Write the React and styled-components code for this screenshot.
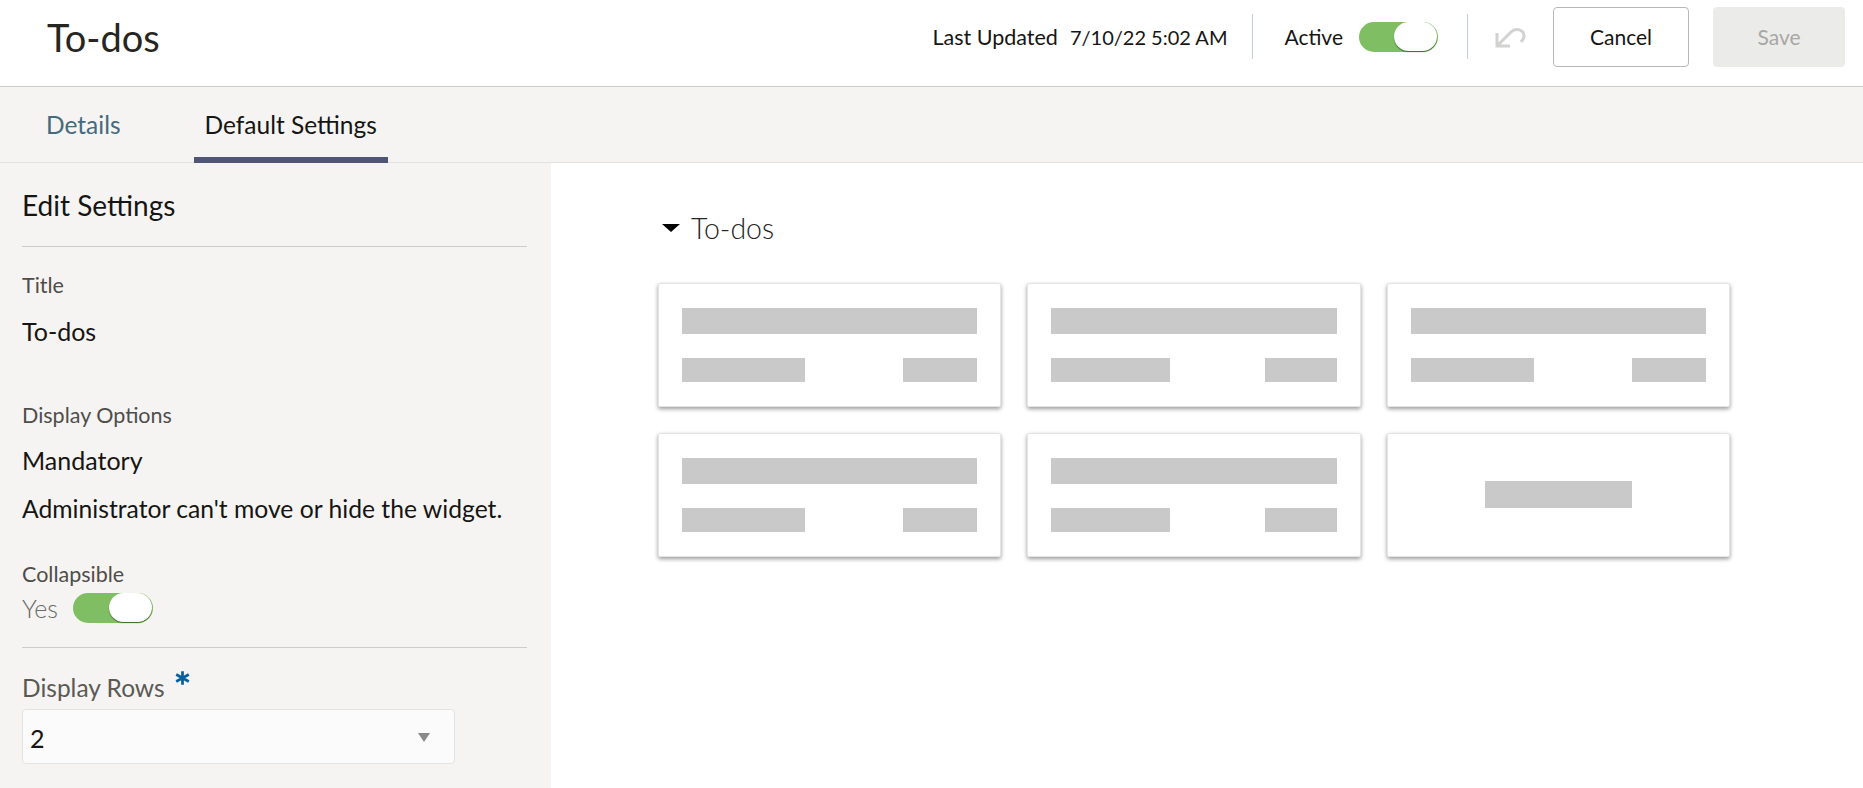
import React from "react";
import styled, { createGlobalStyle } from "styled-components";

const GlobalStyle = createGlobalStyle`
  html, body {
    margin: 0;
    padding: 0;
    background: #fff;
    font-family: "Lato", "Noto Sans", sans-serif;
    color: #161513;
  }
  * { box-sizing: border-box; }
`;

const Page = styled.div`
  width: 1863px;
  height: 788px;
  overflow: hidden;
  display: flex;
  flex-direction: column;
`;

// Top bar
const Header = styled.header`
  height: 87px;
  flex: none;
  display: flex;
  align-items: center;
  padding: 0 18px 13px 47px;
  border-bottom: 1px solid #cfcdc9;
  background: #fff;
`;

const PageTitle = styled.h1`
  margin: 0 auto 0 0;
  font-size: 38px;
  font-weight: 400;
  color: #262522;
`;

const MetaText = styled.span`
  font-size: ${(props) => props.$size}px;
  white-space: nowrap;
  margin-left: ${(props) => props.$gap || 0}px;
`;

const Divider = styled.div`
  width: 1px;
  height: 45px;
  background: #c4ced6;
  margin: 0 ${(props) => props.$right}px 0 ${(props) => props.$left}px;
`;

const SwitchTrack = styled.div`
  position: relative;
  flex: none;
  width: ${(props) => props.$w}px;
  height: 30px;
  border-radius: 15px;
  background: #7fbe62;
  margin-left: ${(props) => props.$gap}px;
`;

const SwitchKnob = styled.div`
  position: absolute;
  top: 0;
  right: 1px;
  width: 43px;
  height: 29px;
  border-radius: 15px;
  background: #fff;
  box-shadow: 0 1px 1px #3d6b2a;
`;

const UndoIcon = styled.svg`
  flex: none;
  margin-right: 26px;
`;

const Button = styled.button`
  height: 60px;
  width: ${(props) => props.$w}px;
  border-radius: 4px;
  font-family: inherit;
  font-size: 21px;
  border: 1px solid ${(props) => (props.disabled ? "#ebebe9" : "#b9b7b3")};
  background: ${(props) => (props.disabled ? "#ebebe9" : "#fff")};
  color: ${(props) => (props.disabled ? "#a8a7a4" : "#161513")};
  margin-left: ${(props) => props.$gap || 0}px;
`;

// Tabs
const TabBar = styled.nav`
  height: 76px;
  flex: none;
  display: flex;
  padding-left: 36px;
  background: #f5f4f2;
  border-bottom: 1px solid #e3e2df;
`;

const Tab = styled.div`
  display: flex;
  align-items: center;
  padding: 4px ${(props) => (props.$active ? 11 : 10)}px 0;
  margin-right: ${(props) => (props.$active ? 0 : 63)}px;
  font-size: 24.500px;
  color: ${(props) => (props.$active ? "#161513" : "#456a7c")};
  border-bottom: 6px solid ${(props) => (props.$active ? "#4f5574" : "transparent")};
  margin-bottom: -1px;
`;

// Body
const Body = styled.div`
  flex: 1;
  display: flex;
  min-height: 0;
`;

const Sidebar = styled.aside`
  width: 551px;
  flex: none;
  background: #f5f4f2;
  padding: 24px 22px 0;
`;

const SidebarTitle = styled.h2`
  margin: 0;
  font-size: 28px;
  line-height: 36px;
  font-weight: 400;
`;

const Rule = styled.hr`
  margin: ${(props) => props.$top}px 0 0;
  border: 0;
  border-top: 1px solid #cdccc9;
  width: 505px;
`;

const FieldLabel = styled.div`
  font-size: 21.500px;
  line-height: 24px;
  color: #4f4d4a;
  margin-top: ${(props) => props.$top}px;
`;

const FieldValue = styled.div`
  font-size: ${(props) => props.$size || 25}px;
  line-height: 30px;
  margin-top: ${(props) => props.$top}px;
  white-space: nowrap;
`;

const ToggleRow = styled.div`
  display: flex;
  align-items: center;
  margin-top: 7px;
`;

const YesText = styled.span`
  font-size: 25px;
  font-weight: 300;
  color: #6b6966;
`;

const RowsLabel = styled.div`
  display: flex;
  font-size: 24.500px;
  line-height: 30px;
  color: #5b5956;
  margin-top: 25px;
`;

const Asterisk = styled.svg`
  margin: -3px 0 0 10px;
  flex: none;
`;

const SelectBox = styled.div`
  width: 433px;
  height: 55px;
  margin-top: 6px;
  display: flex;
  align-items: center;
  justify-content: space-between;
  padding: 2px 24px 0 7px;
  background: #fbfbfb;
  border: 1px solid #e4e3e0;
  border-radius: 4px;
  font-size: 25px;
`;

const SelectArrow = styled.div`
  width: 0;
  height: 0;
  border-left: 6.500px solid transparent;
  border-right: 6.500px solid transparent;
  border-top: 9px solid #8b8a88;
`;

// Preview
const Preview = styled.main`
  flex: 1;
  padding: 44px 0 0 107px;
  background: #fff;
`;

const SectionHeading = styled.div`
  display: flex;
  align-items: center;
  padding-left: 4px;
  height: 42px;
  font-size: 28.500px;
  font-weight: 300;
  color: #262522;
`;

const Caret = styled.div`
  width: 0;
  height: 0;
  margin-right: 11px;
  border-left: 9px solid transparent;
  border-right: 9px solid transparent;
  border-top: 8px solid #000;
`;

const CardGrid = styled.div`
  display: grid;
  grid-template-columns: 343px 334px 343px;
  grid-auto-rows: 124px;
  gap: 26px;
  margin-top: 34px;
`;

const Card = styled.div`
  background: #fff;
  border: 1px solid #e4e4e4;
  box-shadow: 0 2px 4px rgba(0, 0, 0, 0.4);
  border-radius: 2px;
  padding: 24px 23px;
  display: flex;
  flex-direction: column;
`;

const CenterCard = styled(Card)`
  align-items: center;
  padding-top: 47px;
`;

const Bar = styled.div`
  background: #c9c9c9;
  width: ${(props) => (props.$w ? `${props.$w}px` : "auto")};
  height: ${(props) => props.$h}px;
`;

const BarRow = styled.div`
  display: flex;
  justify-content: space-between;
  margin-top: 24px;
`;

const cards = [
  [123, 74],
  [119, 72],
  [123, 74],
  [123, 74],
  [119, 72],
];

const Switch = ({ width, gap }) => (
  <SwitchTrack $w={width} $gap={gap}>
    <SwitchKnob />
  </SwitchTrack>
);

const App = () => (
  <Page>
    <GlobalStyle />
    <Header>
      <PageTitle>To-dos</PageTitle>
      <MetaText $size={21.5}>Last Updated</MetaText>
      <MetaText $size={20} $gap={12}>
        7/10/22 5:02 AM
      </MetaText>
      <Divider $left={25} $right={31} />
      <MetaText $size={21}>Active</MetaText>
      <Switch width={79} gap={16} />
      <Divider $left={29} $right={27} />
      <UndoIcon width="32" height="22" viewBox="0 0 32 22" fill="none" stroke="#d2d2d0" strokeWidth="3">
        <path d="M2 7v13h13M2.500 19.500L16 6c5-5 13-2 13 4 0 3-2 5-3 6" />
      </UndoIcon>
      <Button $w={136}>Cancel</Button>
      <Button $w={132} $gap={24} disabled>
        Save
      </Button>
    </Header>

    <TabBar>
      <Tab>Details</Tab>
      <Tab $active>Default Settings</Tab>
    </TabBar>

    <Body>
      <Sidebar>
        <SidebarTitle>Edit Settings</SidebarTitle>
        <Rule $top={23} />
        <FieldLabel $top={26}>Title</FieldLabel>
        <FieldValue $top={19}>To-dos</FieldValue>
        <FieldLabel $top={57}>Display Options</FieldLabel>
        <FieldValue $top={18}>Mandatory</FieldValue>
        <FieldValue $top={19} $size={24.7}>
          Administrator can't move or hide the widget.
        </FieldValue>
        <FieldLabel $top={38}>Collapsible</FieldLabel>
        <ToggleRow>
          <YesText>Yes</YesText>
          <Switch width={80} gap={15} />
        </ToggleRow>
        <Rule $top={24} />
        <RowsLabel>
          Display Rows
          <Asterisk width="15" height="16" viewBox="0 0 13 14" stroke="#04609f" strokeWidth="2.400">
            <path d="M6.500 1v12M1 4l11 6M12 4L1 10" />
          </Asterisk>
        </RowsLabel>
        <SelectBox>
          2
          <SelectArrow />
        </SelectBox>
      </Sidebar>

      <Preview>
        <SectionHeading>
          <Caret />
          To-dos
        </SectionHeading>
        <CardGrid>
          {cards.map(([left, right], index) => (
            <Card key={index}>
              <Bar $h={27} />
              <BarRow>
                <Bar $w={left} $h={24} />
                <Bar $w={right} $h={24} />
              </BarRow>
            </Card>
          ))}
          <CenterCard>
            <Bar $w={147} $h={27} />
          </CenterCard>
        </CardGrid>
      </Preview>
    </Body>
  </Page>
);

export default App;
